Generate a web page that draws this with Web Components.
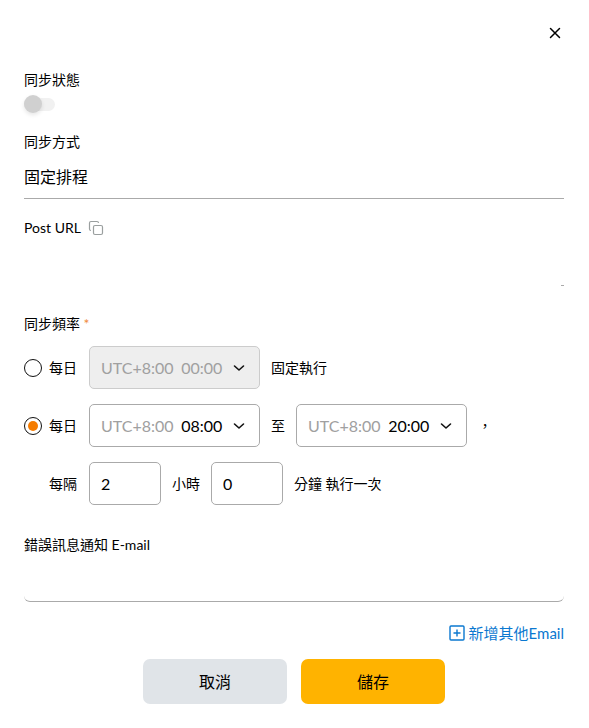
<!DOCTYPE html>
<html lang="zh-Hant">
<head>
<meta charset="utf-8">
<meta name="viewport" content="width=device-width, initial-scale=1">
<title>同步設定</title>
<style>
    body {
        margin: 0;
        background: #fff;
        color: #000;
        font: 14px/20px Lato, "Noto Sans CJK TC", sans-serif;
    }
</style>
</head>
<body>
<sync-dialog>
    <toggle-field slot="fields" label="同步狀態"></toggle-field>
    <text-field slot="fields" label="同步方式" value="固定排程" variant="line"></text-field>
    <text-field slot="fields" label="Post URL" variant="corner" copy></text-field>
    <schedule-field slot="fields" label="同步頻率"></schedule-field>
    <text-field slot="fields" label="錯誤訊息通知 E-mail" variant="round"></text-field>
    <add-link slot="more">新增其他Email</add-link>
    <action-button slot="actions">取消</action-button>
    <action-button slot="actions" primary>儲存</action-button>
</sync-dialog>
<script>
class SyncDialog extends HTMLElement {
    constructor() {
        super();
        this.attachShadow({ mode: "open" })
            .innerHTML = /*html*/ `
            <style>
                :host {
                    display: flex;
                    flex-direction: column;
                    padding: 23px 25px 24px 24px;
                }
                .close {
                    align-self: flex-end;
                    display: flex;
                    width: 20px;
                    height: 20px;
                    padding: 0;
                    align-items: center;
                    justify-content: center;
                    border: 0;
                    background: none;
                    color: inherit;
                    cursor: pointer;
                }
                .fields {
                    display: flex;
                    flex-direction: column;
                    gap: 19px;
                    padding-top: 27px;
                }
                .more {
                    display: flex;
                    justify-content: flex-end;
                    padding-top: 21px;
                }
                .actions {
                    display: flex;
                    justify-content: center;
                    gap: 14px;
                    padding-top: 16px;
                }
            </style>
            <button class="close" type="button" aria-label="關閉">
                <svg width="20" height="20" viewBox="0 0 20 20" fill="none" stroke="currentColor" stroke-width="1.5" stroke-linecap="round">
                    <path d="M6.5 5.5l9 9M15.5 5.5l-9 9"/>
                </svg>
            </button>
            <div class="fields"><slot name="fields"></slot></div>
            <div class="more"><slot name="more"></slot></div>
            <div class="actions"><slot name="actions"></slot></div>
        `;
    }
}

class ToggleField extends HTMLElement {
    connectedCallback() {
        this.attachShadow({ mode: "open" })
            .innerHTML = /*html*/ `
            <style>
                :host {
                    display: flex;
                    flex-direction: column;
                    align-items: flex-start;
                    gap: 5px;
                }
                input {
                    appearance: none;
                    display: grid;
                    align-items: center;
                    width: 31px;
                    height: 18px;
                    margin: 0;
                }
                input::before,
                input::after {
                    content: "";
                    grid-area: 1 / 1;
                }
                input::before {
                    height: 13px;
                    border-radius: 7px;
                    background: #f1f1f1;
                }
                input::after {
                    width: 18px;
                    height: 18px;
                    border-radius: 50%;
                    background: #d0d0d0;
                    box-shadow: 0 2px 4px #0000001a;
                }
                input:checked::after {
                    justify-self: end;
                    background: #f57c00;
                }
            </style>
            <label for="toggle">${this.getAttribute('label')}</label>
            <input id="toggle" type="checkbox" role="switch">
        `;
    }
}

/**
 * Text box under its label. The variant picks the edge that is drawn: line, corner or round.
 */
class TextField extends HTMLElement {
    connectedCallback() {
        const variant = this.getAttribute('variant');
        this.attachShadow({ mode: "open" })
            .innerHTML = /*html*/ `
            <style>
                :host {
                    display: flex;
                    flex-direction: column;
                }
                .head {
                    display: flex;
                    align-items: center;
                    gap: 7px;
                }
                button {
                    display: flex;
                    padding: 0;
                    border: 0;
                    background: none;
                    color: #9a9f9f;
                    cursor: pointer;
                }
                .box {
                    display: flex;
                    flex-direction: column;
                    align-items: flex-end;
                }
                input {
                    box-sizing: border-box;
                    width: 100%;
                    height: 47px;
                    padding: 0;
                    border: 0;
                    outline: 0;
                    background: none;
                    color: inherit;
                    font: inherit;
                    font-size: 16px;
                }
                .line input {
                    padding-top: 2px;
                    border-bottom: 1px solid #aaa;
                }
                .round input {
                    padding: 0 11px;
                    border-bottom: 1px solid #aaa;
                    border-radius: 6px;
                }
                .corner::after {
                    content: "";
                    width: 3px;
                    height: 1px;
                    background: #aaa;
                }
            </style>
            <div class="head">
                <label for="text">${this.getAttribute('label')}</label>
                ${this.hasAttribute('copy') ? /*html*/ `
                <button type="button" aria-label="複製">
                    <svg width="16" height="16" viewBox="0 0 16 16" fill="none" stroke="currentColor" stroke-width="1.2">
                        <rect x="5.5" y="5.5" width="9" height="9" rx="1.5"/>
                        <path d="M3 10.5C2 10.5 1.5 10 1.5 9V3C1.5 2 2 1.500 3 1.500h6C10 1.500 10.500 2 10.500 3"/>
                    </svg>
                </button>` : ''}
            </div>
            <div class="box ${variant}">
                <input id="text" type="text" value="${this.getAttribute('value') || ''}">
            </div>
        `;
    }
}

class TimeSelect extends HTMLElement {
    connectedCallback() {
        const value = this.getAttribute('value');
        const options = Array.from({ length: 24 }, (_, hour) => {
            const time = `${String(hour).padStart(2, '0')}:00`;
            return `<option${time === value ? ' selected' : ''}>${time}</option>`;
        }).join('');
        this.attachShadow({ mode: "open" })
            .innerHTML = /*html*/ `
            <style>
                :host {
                    box-sizing: border-box;
                    display: flex;
                    width: 171px;
                    height: 43px;
                    padding: 0 12px 0 11px;
                    border: 1px solid #aaa;
                    border-radius: 5px;
                    align-items: center;
                    justify-content: space-between;
                    font-size: 16px;
                }
                :host([disabled]) {
                    background: #eee;
                    border-color: #ccc;
                }
                label {
                    color: #a0a0a0;
                }
                select {
                    appearance: none;
                    padding: 0;
                    border: 0;
                    outline: 0;
                    background: none;
                    color: inherit;
                    font: inherit;
                    opacity: 1;
                }
                select:disabled {
                    color: #a0a0a0;
                }
                svg {
                    pointer-events: none;
                }
            </style>
            <label for="time">UTC+8:00</label>
            <select id="time" ${this.hasAttribute('disabled') ? 'disabled' : ''}>${options}</select>
            <svg width="16" height="16" viewBox="0 0 16 16" fill="none" stroke="#111" stroke-width="1.6" stroke-linecap="round" stroke-linejoin="round">
                <path d="M3.500 6L8 10 12.500 6"/>
            </svg>
        `;
    }
}

class ScheduleField extends HTMLElement {
    connectedCallback() {
        this.attachShadow({ mode: "open" })
            .innerHTML = /*html*/ `
            <style>
                :host {
                    display: flex;
                    flex-direction: column;
                    padding: 9px 0 11px;
                }
                fieldset {
                    min-width: 0;
                    margin: 0;
                    padding: 0;
                    border: 0;
                }
                legend {
                    padding: 0 0 12px;
                }
                legend span {
                    color: #f08a3c;
                }
                .rows {
                    display: flex;
                    flex-direction: column;
                    gap: 15px;
                }
                .row {
                    display: grid;
                    grid-template-columns: 18px 29px auto 1fr;
                    column-gap: 7px;
                    align-items: center;
                }
                .controls {
                    display: flex;
                    align-items: center;
                    gap: 11px;
                    padding-left: 4px;
                    white-space: nowrap;
                }
                .every {
                    grid-column: 2;
                }
                input[type="radio"] {
                    appearance: none;
                    box-sizing: border-box;
                    display: grid;
                    width: 18px;
                    height: 18px;
                    margin: 0;
                    place-items: center;
                    border: 1px solid #111;
                    border-radius: 50%;
                }
                input[type="radio"]:checked::before {
                    content: "";
                    width: 10px;
                    height: 10px;
                    border-radius: 50%;
                    background: #f57c00;
                }
                input[type="text"] {
                    box-sizing: border-box;
                    width: 72px;
                    height: 43px;
                    padding: 0 11px;
                    border: 1px solid #aaa;
                    border-radius: 5px;
                    color: inherit;
                    font: inherit;
                    font-size: 16px;
                }
            </style>
            <fieldset>
                <legend>${this.getAttribute('label')} <span>*</span></legend>
                <div class="rows">
                    <div class="row">
                        <input id="fixed" type="radio" name="mode">
                        <label for="fixed">每日</label>
                        <div class="controls">
                            <time-select value="00:00" disabled></time-select>
                            <span>固定執行</span>
                        </div>
                    </div>
                    <div class="row">
                        <input id="range" type="radio" name="mode" checked>
                        <label for="range">每日</label>
                        <div class="controls">
                            <time-select value="08:00"></time-select>
                            <span>至</span>
                            <time-select value="20:00"></time-select>
                            <span>，</span>
                        </div>
                    </div>
                    <div class="row">
                        <label class="every" for="hours">每隔</label>
                        <div class="controls">
                            <input id="hours" type="text" inputmode="numeric" value="2">
                            <label for="hours">小時</label>
                            <input id="minutes" type="text" inputmode="numeric" value="0">
                            <label for="minutes">分鐘 執行一次</label>
                        </div>
                    </div>
                </div>
            </fieldset>
        `;
    }
}

class AddLink extends HTMLElement {
    constructor() {
        super();
        this.attachShadow({ mode: "open" })
            .innerHTML = /*html*/ `
            <style>
                :host {
                    display: block;
                    font-size: 15px;
                }
                a {
                    display: flex;
                    align-items: center;
                    gap: 4px;
                    color: #0b78d0;
                    text-decoration: none;
                }
            </style>
            <a href="#">
                <svg width="16" height="16" viewBox="0 0 16 16" fill="none" stroke="currentColor" stroke-width="1.4">
                    <rect x="1" y="1" width="14" height="14" rx="1"/>
                    <path d="M8 4.5v7M4.5 8h7"/>
                </svg>
                <slot></slot>
            </a>
        `;
    }
}

class ActionButton extends HTMLElement {
    constructor() {
        super();
        this.attachShadow({ mode: "open" })
            .innerHTML = /*html*/ `
            <style>
                :host {
                    display: block;
                    --fill: #e0e4e8;
                }
                :host([primary]) {
                    --fill: #ffb300;
                }
                button {
                    min-width: 144px;
                    height: 45px;
                    border: 0;
                    border-radius: 7px;
                    background: var(--fill);
                    color: inherit;
                    font: inherit;
                    font-size: 16px;
                    cursor: pointer;
                }
            </style>
            <button type="button"><slot></slot></button>
        `;
    }
}

customElements.define('sync-dialog', SyncDialog);
customElements.define('toggle-field', ToggleField);
customElements.define('text-field', TextField);
customElements.define('time-select', TimeSelect);
customElements.define('schedule-field', ScheduleField);
customElements.define('add-link', AddLink);
customElements.define('action-button', ActionButton);
</script>
</body>
</html>
